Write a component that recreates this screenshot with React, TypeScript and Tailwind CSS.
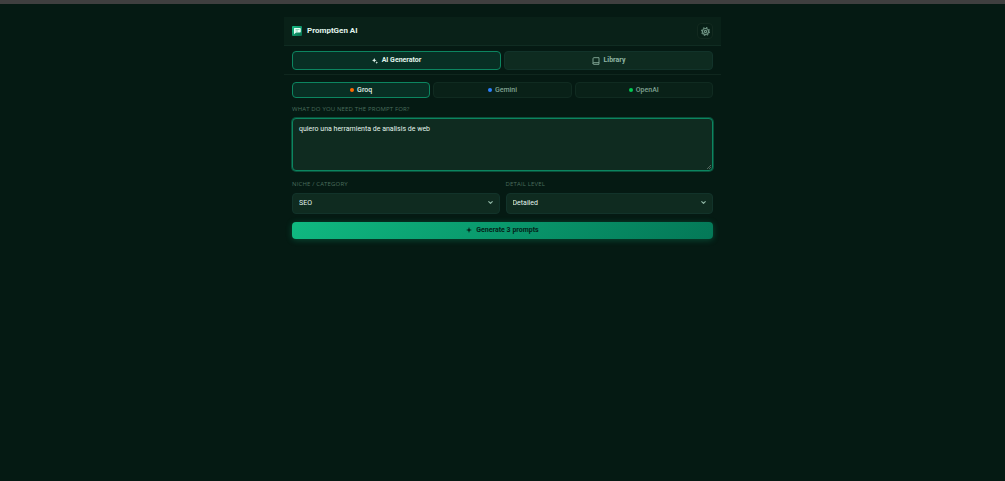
import { useState } from "react";
import { ChevronDown } from "lucide-react";

const providers = [
  { name: "Groq", dot: "bg-orange-500" },
  { name: "Gemini", dot: "bg-blue-500" },
  { name: "OpenAI", dot: "bg-green-500" },
];

const selects = [
  { id: "niche", label: "Niche / Category", options: ["SEO", "Marketing", "Development"] },
  { id: "detail", label: "Detail level", options: ["Detailed", "Basic", "Expert"] },
];

const active = "border-[#0c8560] bg-[#082f24] text-[#e2f5ec]";

function Logo() {
  return (
    <svg viewBox="0 0 20 20" className="w-[10px] h-[10px] shrink-0" aria-hidden="true">
      <defs>
        <linearGradient id="logo" x1="0" y1="0" x2="1" y2="1">
          <stop offset="0" stopColor="#18bd87" />
          <stop offset="1" stopColor="#07704f" />
        </linearGradient>
      </defs>
      <rect width="20" height="20" rx="2" fill="url(#logo)" />
      <path d="M5 4h11a1.500 1.500 0 0 1 1.500 1.500v6a1.500 1.500 0 0 1-1.500 1.500H8l-4 3.500V5.500A1.500 1.500 0 0 1 5 4z" fill="#e8fff6" />
      <path d="M7 7h8M7 10h5" stroke="#4dba95" strokeWidth="1.200" />
    </svg>
  );
}

function Sparkles() {
  return (
    <svg viewBox="0 0 24 24" className="w-[6px] h-[6px]" fill="currentColor" aria-hidden="true">
      <path d="M9 0l3 6.500L18 9l-6 3L9 18l-3-6L0 9l6-2.500z" />
      <path d="M19 13l1.500 4 3.500 1.500-3.500 1.500L19 24l-1.500-4-3.500-1.500 3.500-1.500z" />
    </svg>
  );
}

function Book() {
  return (
    <svg viewBox="0 0 24 24" className="w-[8px] h-[8px]" fill="none" stroke="currentColor" strokeWidth="2.500" aria-hidden="true">
      <path d="M3 20V5a3 3 0 0 1 3-3h15v20H5.500A2.500 2.500 0 0 1 3 19.500 2.500 2.500 0 0 1 5.500 17H21" />
    </svg>
  );
}

function Gear() {
  return (
    <svg viewBox="0 0 24 24" className="w-[9px] h-[9px]" fill="none" stroke="currentColor" aria-hidden="true">
      <circle cx="12" cy="12" r="8" strokeWidth="3" />
      <circle cx="12" cy="12" r="3" strokeWidth="3" />
      <circle cx="12" cy="12" r="10.500" strokeWidth="3" strokeDasharray="4.123 4.123" />
    </svg>
  );
}

export default function App() {
  const [tab, setTab] = useState("generator");
  const [provider, setProvider] = useState("Groq");
  const [prompt, setPrompt] = useState("quiero una herramienta de analisis de web");

  return (
    <div className="min-h-screen bg-[#051a13] border-t-4 border-[#3f3f3f] pt-[13px] font-[Roboto,sans-serif]">
      <main className="max-w-[437px] mx-auto">
        <header className="h-[29px] flex items-center justify-between px-2 bg-[#092118] border-b border-[#102c22]">
          <div className="flex items-center gap-[5px]">
            <Logo />
            <h1 className="text-[8px] leading-3 font-bold text-[#e2f5ec]">PromptGen AI</h1>
          </div>
          <button
            type="button"
            aria-label="Settings"
            className="w-4 h-4 flex items-center justify-center rounded-[4px] border border-[#12291f] bg-[#071f16] text-[#6f9484]"
          >
            <Gear />
          </button>
        </header>

        {/* Tabs */}
        <nav className="grid grid-cols-2 gap-[3px] px-2 pt-[5px] pb-1 border-b border-[#0f271e]">
          <button
            type="button"
            onClick={() => setTab("generator")}
            className={`h-[19px] flex items-center justify-center gap-1 rounded-[4px] border text-[7px] font-bold ${tab === "generator" ? active : "border-[#12332a] bg-[#0e2b20] text-[#8fb5a4]"}`}
          >
            <Sparkles />
            AI Generator
          </button>
          <button
            type="button"
            onClick={() => setTab("library")}
            className={`h-[19px] flex items-center justify-center gap-1 rounded-[4px] border text-[7px] font-bold ${tab === "library" ? active : "border-[#12332a] bg-[#0e2b20] text-[#8fb5a4]"}`}
          >
            <Book />
            Library
          </button>
        </nav>

        <form className="px-2 pt-[7px]" onSubmit={(e) => e.preventDefault()}>
          {/* Providers */}
          <div className="grid grid-cols-3 gap-[3px] mb-[6px]">
            {providers.map((p) => (
              <button
                key={p.name}
                type="button"
                onClick={() => setProvider(p.name)}
                className={`h-4 flex items-center justify-center gap-[3px] rounded-[4px] border text-[7px] font-medium ${provider === p.name ? active : "border-[#102b21] bg-[#092118] text-[#7fa292]"}`}
              >
                <span className={`w-1 h-1 rounded-full ${p.dot}`} />
                {p.name}
              </button>
            ))}
          </div>

          <label htmlFor="prompt" className="block mb-1 text-[6px] leading-[10px] tracking-wide uppercase text-[#4a6d5d] font-['Open_Sans',sans-serif]">
            What do you need the prompt for?
          </label>
          <div className="relative">
            <textarea
              id="prompt"
              autoFocus
              onFocus={(e) => e.target.setSelectionRange(e.target.value.length, e.target.value.length)}
              value={prompt}
              onChange={(e) => setPrompt(e.target.value)}
              className="block w-full h-[53px] px-[6px] py-[5px] resize-none rounded-[4px] border border-[#0c8560] bg-[#0f2b20] text-[7px] leading-[10px] text-[#e2f5ec] outline-none ring-1 ring-[#0c8560]/50"
            />
            <svg viewBox="0 0 4 4" className="absolute right-[2px] bottom-[2px] w-1 h-1 text-[#7d8f87] pointer-events-none" stroke="currentColor" strokeWidth="0.600" aria-hidden="true">
              <path d="M0 4l4-4M2 4l2-2" />
            </svg>
          </div>

          <div className="grid grid-cols-2 gap-[6px] mt-2 mb-2">
            {selects.map((s) => (
              <div key={s.id}>
                <label htmlFor={s.id} className="block mb-1 text-[6px] leading-[10px] tracking-wide uppercase text-[#4a6d5d] font-['Open_Sans',sans-serif]">
                  {s.label}
                </label>
                <div className="relative">
                  <select
                    id={s.id}
                    className="block appearance-none w-full h-[21px] px-[6px] rounded-[4px] border border-[#12332a] bg-[#0f2b20] text-[7px] text-[#e2f5ec] outline-none"
                  >
                    {s.options.map((o) => (
                      <option key={o}>{o}</option>
                    ))}
                  </select>
                  <ChevronDown className="absolute right-[6px] top-[6px] w-[7px] h-[7px] text-[#8fb5a4] pointer-events-none" strokeWidth={4} />
                </div>
              </div>
            ))}
          </div>

          <button
            type="submit"
            className="w-full h-[17px] flex items-center justify-center gap-1 rounded-[4px] bg-linear-135 from-[#10b981] to-[#047857] text-[7px] font-bold text-[#04241a] shadow-[0_1px_6px_#10b98150]"
          >
            <svg viewBox="0 0 12 12" className="w-[6px] h-[6px] mb-[2px]" fill="currentColor" aria-hidden="true">
              <path d="M6 0l1.500 4.500L12 6 7.500 7.500 6 12 4.500 7.500 0 6l4.500-1.500z" />
            </svg>
            Generate 3 prompts
          </button>
        </form>
      </main>
    </div>
  );
}
